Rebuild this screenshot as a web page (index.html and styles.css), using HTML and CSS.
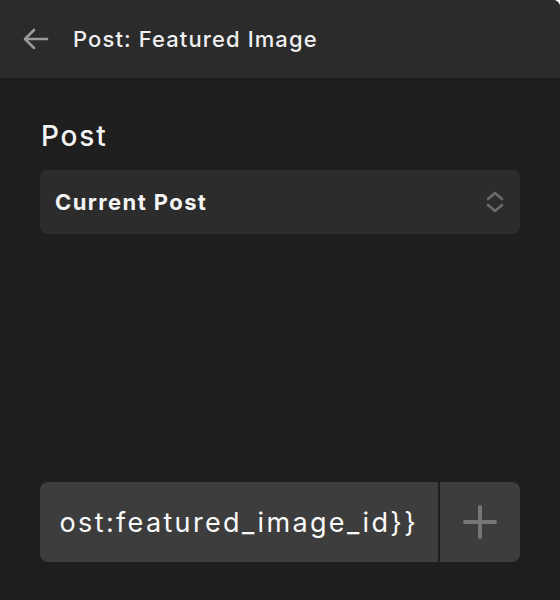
FILE: index.html
```html
<!DOCTYPE html>
<html lang="en">
<head>
    <meta charset="UTF-8">
    <meta name="viewport" content="width=device-width, initial-scale=1.0">
    <title>Post: Featured Image</title>
    <link rel="stylesheet" href="styles.css">
</head>
<body>
    <div class="panel">
        <div class="panel-header">
            <button class="back-btn" aria-label="Back">
                <svg width="26" height="22" viewBox="0 0 26 22" fill="none" stroke="#9a9a9a" stroke-width="2.6" stroke-linecap="round" stroke-linejoin="round">
                    <path d="M24 11H3"/>
                    <path d="M11 2L2 11l9 9"/>
                </svg>
            </button>
            <h2 class="panel-title">Post: Featured Image</h2>
        </div>

        <div class="panel-body">
            <label class="field-label">Post</label>
            <div class="select">
                <span class="select-value">Current Post</span>
                <svg class="select-arrows" width="18" height="24" viewBox="0 0 18 24" fill="none" stroke="#6a6a6a" stroke-width="2.6" stroke-linecap="round" stroke-linejoin="round">
                    <path d="M2 9l7-6 7 6"/>
                    <path d="M2 15l7 6 7-6"/>
                </svg>
            </div>

            <div class="input-group">
                <div class="input-field">
                    <div class="input-scroll">
                        <span class="input-text">{{post:featured_image_id}}</span>
                    </div>
                </div>
                <button class="add-btn" aria-label="Add">
                    <svg width="34" height="34" viewBox="0 0 34 34" fill="none" stroke="#767676" stroke-width="4" stroke-linecap="round">
                        <path d="M17 2v30"/>
                        <path d="M2 17h30"/>
                    </svg>
                </button>
            </div>
        </div>
    </div>
</body>
</html>
```

FILE: styles.css
```css
* {
    box-sizing: border-box;
}
body {
    margin: 0;
    background-color: #fff;
    font-family: Inter, "Noto Sans", sans-serif;
    color: #f2f2f2;
}
.panel {
    width: 560px;
    height: 600px;
    background-color: #1e1e1e;
    border-top-right-radius: 7px;
    overflow: hidden;
    display: flex;
    flex-direction: column;
}
.panel-header {
    height: 78px;
    background-color: #2b2b2b;
    display: flex;
    align-items: center;
    padding-left: 23px;
    gap: 24px;
    flex-shrink: 0;
}
.back-btn {
    background: none;
    border: none;
    padding: 0;
    display: flex;
}
.panel-title {
    margin: 0;
    font-size: 22px;
    font-weight: 500;
    color: #efefef;
    letter-spacing: 1.1px;
}
.panel-body {
    flex: 1;
    display: flex;
    flex-direction: column;
    padding: 40px 40px 38px 41px;
}
.field-label {
    font-size: 28px;
    font-weight: 500;
    line-height: 36px;
    letter-spacing: 1.8px;
    color: #f4f4f4;
}
.select {
    margin-top: 16px;
    margin-left: -1px;
    height: 64px;
    background-color: #2c2c2c;
    border-radius: 7px;
    display: flex;
    align-items: center;
    justify-content: space-between;
    padding: 0 16px 0 15px;
}
.select-value {
    font-size: 22px;
    font-weight: 700;
    letter-spacing: 1.4px;
    color: #f4f4f4;
}
.input-group {
    margin-top: auto;
    margin-left: -1px;
    height: 80px;
    display: flex;
    gap: 2px;
    border-radius: 8px;
    overflow: hidden;
}
.input-field {
    flex: 1;
    min-width: 0;
    background-color: #3d3d3d;
    display: flex;
    align-items: center;
    padding: 0 20px 0 18px;
}
.input-scroll {
    flex: 1;
    min-width: 0;
    overflow: hidden;
    display: flex;
    justify-content: flex-end;
}
.input-text {
    font-size: 27px;
    letter-spacing: 2.35px;
    white-space: nowrap;
    color: #fafafa;
}
.add-btn {
    width: 80px;
    background-color: #3d3d3d;
    border: none;
    padding: 0;
    display: flex;
    align-items: center;
    justify-content: center;
}
```
